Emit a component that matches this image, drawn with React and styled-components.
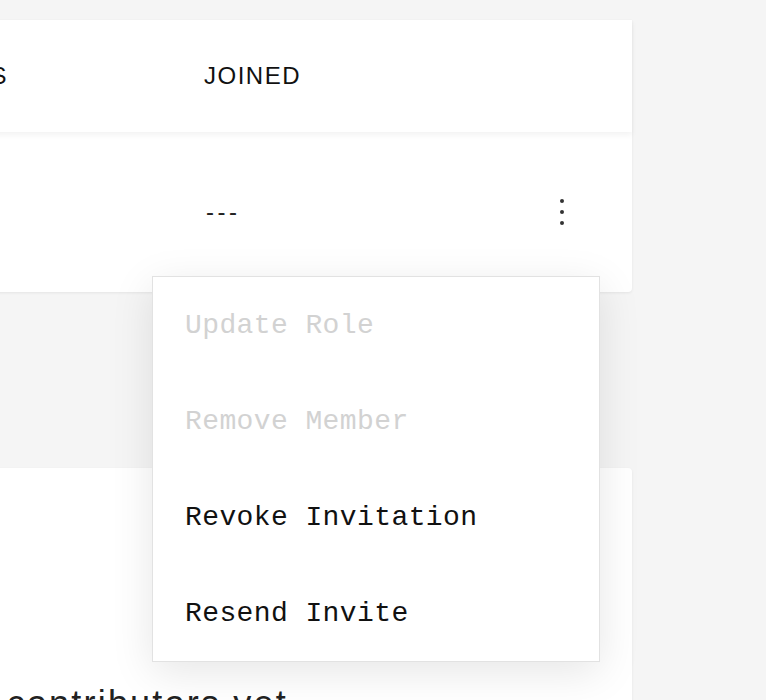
import React from "react";
import styled, { createGlobalStyle } from "styled-components";

const Global = createGlobalStyle`
  html, body {
    margin: 0;
    padding: 0;
    background: #f5f5f5;
    overflow: hidden;
    font-family: "Liberation Sans", Arial, sans-serif;
    color: #111;
  }
`;

const Page = styled.div`
  display: flex;
  flex-direction: column;
  gap: 176px;
  padding-top: 20px;
  height: 700px;
  box-sizing: border-box;
`;

const Card = styled.section`
  margin-left: -400px;
  width: 1032px;
  background: #fff;
  border-radius: 0 0 4px 4px;
  box-shadow: 0 1px 3px rgba(0, 0, 0, 0.07);
  position: relative;
`;

const Grid = styled.div`
  display: grid;
  grid-template-columns: 276px 296px 1fr 40px;
  align-items: center;
  padding: 0 50px 0 32px;
  height: ${(p) => p.$h}px;
  position: relative;
`;

const HeaderRow = styled(Grid)`
  box-shadow: 0 3px 6px rgba(0, 0, 0, 0.05);
  z-index: 1;
`;

const HeadCell = styled.div`
  font-size: 24px;
  letter-spacing: 1.5px;
  text-transform: uppercase;
  color: #111;
`;

const Cell = styled.div`
  font-size: 24px;
  letter-spacing: ${(p) => (p.$wide ? "3.5px" : "0.5px")};
  color: #222;
  padding-left: ${(p) => (p.$wide ? "2px" : "0")};
`;

const KebabButton = styled.button`
  width: 40px;
  height: 40px;
  border: 0;
  background: transparent;
  padding: 0;
  display: flex;
  align-items: center;
  justify-content: center;
  cursor: pointer;
`;

const Menu = styled.ul`
  position: absolute;
  top: 144px;
  right: 32px;
  width: 448px;
  margin: 0;
  padding: 0;
  list-style: none;
  background: #fff;
  border: 1px solid #e2e2e2;
  box-sizing: border-box;
  box-shadow: 0 10px 40px rgba(0, 0, 0, 0.1);
  z-index: 5;
`;

const MenuItem = styled.li`
  height: 96px;
  display: flex;
  align-items: center;
  padding: 0 32px;
  font-family: "Liberation Mono", "DejaVu Sans Mono", monospace;
  font-size: 28px;
  letter-spacing: 0.4px;
  color: ${(p) => (p.$disabled ? "#d2d2d2" : "#111")};
  cursor: ${(p) => (p.$disabled ? "default" : "pointer")};
`;

const EmptyCard = styled.section`
  margin-left: -400px;
  width: 1032px;
  flex: 1;
  background: #fff;
  border-radius: 4px 4px 0 0;
  box-shadow: 0 1px 3px rgba(0, 0, 0, 0.07);
  padding-top: 214px;
  box-sizing: border-box;
  text-align: center;
`;

const EmptyText = styled.p`
  margin: 0;
  font-size: 36px;
  line-height: 1.2;
  letter-spacing: 2.2px;
  color: #222;
`;

const Kebab = () => (
  <svg width="8" height="30" viewBox="0 0 8 30" aria-hidden="true">
    <circle cx="4" cy="4" r="2" fill="#333" />
    <circle cx="4" cy="15" r="2" fill="#333" />
    <circle cx="4" cy="26" r="2" fill="#333" />
  </svg>
);

const items = [
  { label: "Update Role", disabled: true },
  { label: "Remove Member", disabled: true },
  { label: "Revoke Invitation" },
  { label: "Resend Invite" },
];

export default function App() {
  return (
    <>
      <Global />
      <Page>
        <Card>
          <HeaderRow $h={112}>
            <span />
            <HeadCell>Status</HeadCell>
            <HeadCell>Joined</HeadCell>
            <span />
          </HeaderRow>
          <Grid $h={160}>
            <span />
            <span />
            <Cell $wide>---</Cell>
            <KebabButton aria-label="More actions">
              <Kebab />
            </KebabButton>
            <Menu>
              {items.map((it) => (
                <MenuItem key={it.label} $disabled={it.disabled}>
                  {it.label}
                </MenuItem>
              ))}
            </Menu>
          </Grid>
        </Card>
        <EmptyCard>
          <EmptyText>No contributors yet</EmptyText>
        </EmptyCard>
      </Page>
    </>
  );
}
